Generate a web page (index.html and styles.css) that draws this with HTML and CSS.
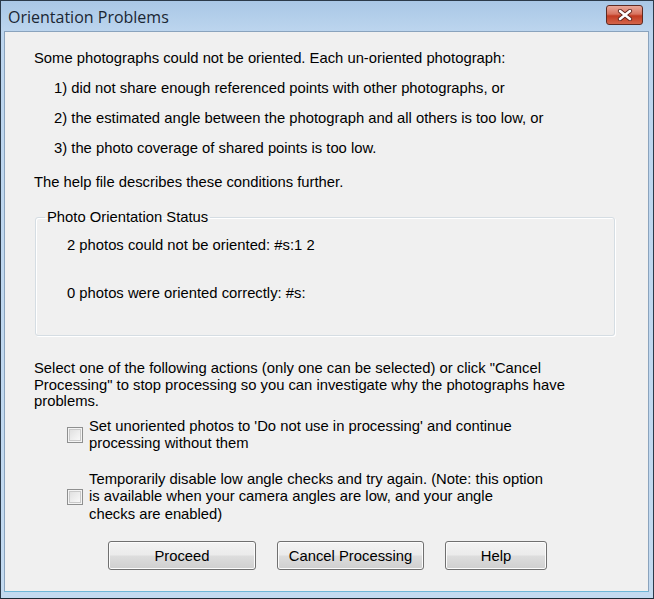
FILE: index.html
```html
<!DOCTYPE html>
<html>
<head>
<meta charset="utf-8">
<link rel="stylesheet" href="styles.css">
</head>
<body>
<div class="window">
  <div class="titlebar">
    <span class="title">Orientation Problems</span>
    <span class="close">
      <svg width="16" height="12" viewBox="0 0 16 12">
        <path d="M3 2 L13 10 M13 2 L3 10" stroke="#5a2018" stroke-width="4.2" stroke-linecap="round"/>
        <path d="M3 2 L13 10 M13 2 L3 10" stroke="#ffffff" stroke-width="2.6" stroke-linecap="round"/>
      </svg>
    </span>
  </div>
  <div class="client">
    <p class="line">Some photographs could not be oriented. Each un-oriented photograph:</p>
    <p class="line item">1) did not share enough referenced points with other photographs, or</p>
    <p class="line item">2) the estimated angle between the photograph and all others is too low, or</p>
    <p class="line item last">3) the photo coverage of shared points is too low.</p>
    <p class="line help">The help file describes these conditions further.</p>
    <fieldset class="group">
      <legend class="legend">Photo Orientation Status</legend>
      <p class="status first">2 photos could not be oriented: #s:1 2</p>
      <p class="status">0 photos were oriented correctly: #s:</p>
    </fieldset>
    <p class="select">Select one of the following actions (only one can be selected) or click "Cancel<br>Processing" to stop processing so you can investigate why the photographs have<br>problems.</p>
    <div class="option opt1">
      <span class="check"></span>
      <span class="opttext">Set unoriented photos to 'Do not use in processing' and continue<br>processing without them</span>
    </div>
    <div class="option opt2">
      <span class="check"></span>
      <span class="opttext">Temporarily disable low angle checks and try again. (Note: this option<br>is available when your camera angles are low, and your angle<br>checks are enabled)</span>
    </div>
    <div class="buttons">
      <span class="btn b-proceed">Proceed</span>
      <span class="btn b-cancel">Cancel Processing</span>
      <span class="btn b-help">Help</span>
    </div>
  </div>
</div>
</body>
</html>
```

FILE: styles.css
```css
html, body {
  margin: 0;
  padding: 0;
  background: #ffffff;
}
.window {
  width: 654px;
  height: 599px;
  box-sizing: border-box;
  border: 1px solid #2b3a4a;
  border-bottom-color: #1d2a36;
  background: linear-gradient(#a9c7e6 0px, #bcd5ee 30px, #c3daf0 100%);
  display: flex;
  flex-direction: column;
  padding: 0 4px 6px 3px;
  font-family: "Liberation Sans", Arial, sans-serif;
  font-size: 14.8px;
  color: #000;
}
.titlebar {
  height: 30px;
  flex: none;
  display: flex;
  align-items: center;
  justify-content: space-between;
  padding: 0 0 0 4px;
}
.title {
  font-family: "Open Sans", "Liberation Sans", sans-serif;
  font-size: 16px;
  color: #1a2633;
  margin-top: 1px;
}
.close {
  width: 37px;
  height: 20px;
  box-sizing: border-box;
  border: 1px solid #5e2a22;
  border-radius: 3px;
  background: linear-gradient(#e9a89a 0%, #d8735f 45%, #c23b22 55%, #d4654a 100%);
  display: flex;
  align-items: center;
  justify-content: center;
  margin-top: -2px;
  margin-right: 6px;
}
.close svg { display: block; }
.client {
  flex: 1;
  background: #f0f0f0;
  border: 1px solid #8aa3bd;
  border-bottom-color: #6fb7d8;
  box-sizing: border-box;
  padding: 18px 0 0 29px;
  display: flex;
  flex-direction: column;
  align-items: flex-start;
}
p { margin: 0; }
.line {
  line-height: 17px;
  margin-bottom: 13px;
  white-space: nowrap;
}
.item { padding-left: 20px; }
.item.last { margin-bottom: 17px; }
.help { margin-bottom: 0; }
.group {
  margin: 18px 0 0 1px;
  width: 580px;
  height: 127px;
  box-sizing: border-box;
  border: 1px solid #d5dde3;
  border-radius: 3px;
  box-shadow: inset 1px 1px 0 #ffffff, 1px 1px 0 #ffffff;
  padding: 0 0 0 31px;
}
.legend {
  padding: 0 2px;
  margin-left: -22px;
  line-height: 17px;
}
.status {
  line-height: 17px;
  white-space: nowrap;
}
.status.first { margin-top: 11px; margin-bottom: 31px; }
.select {
  margin-top: 24px;
  line-height: 16.5px;
  white-space: nowrap;
}
.option {
  display: flex;
  align-items: center;
  margin-left: 33px;
  line-height: 17.5px;
}
.opt1 { margin-top: 8px; }
.opt2 { margin-top: 18px; }
.check {
  width: 16px;
  height: 16px;
  box-sizing: border-box;
  border: 1px solid #8e8f8f;
  background: linear-gradient(135deg, #dcdcdc, #fdfdfd);
  box-shadow: inset 0 0 0 1px #f4f4f4, inset 0 0 0 2px #c9c9c9;
  margin-right: 6px;
  flex: none;
}
.opttext { white-space: nowrap; }
.buttons {
  display: flex;
  gap: 21px;
  margin: 18px 0 0 74px;
}
.btn {
  height: 29px;
  box-sizing: border-box;
  border: 1px solid #707070;
  border-radius: 3px;
  background: linear-gradient(#f3f3f3 0%, #ebebeb 48%, #dddddd 52%, #cfcfcf 100%);
  box-shadow: inset 0 0 0 1px #fcfcfc;
  display: flex;
  align-items: center;
  justify-content: center;
}
.b-proceed { width: 148px; }
.b-cancel { width: 147px; }
.b-help { width: 102px; }
```
